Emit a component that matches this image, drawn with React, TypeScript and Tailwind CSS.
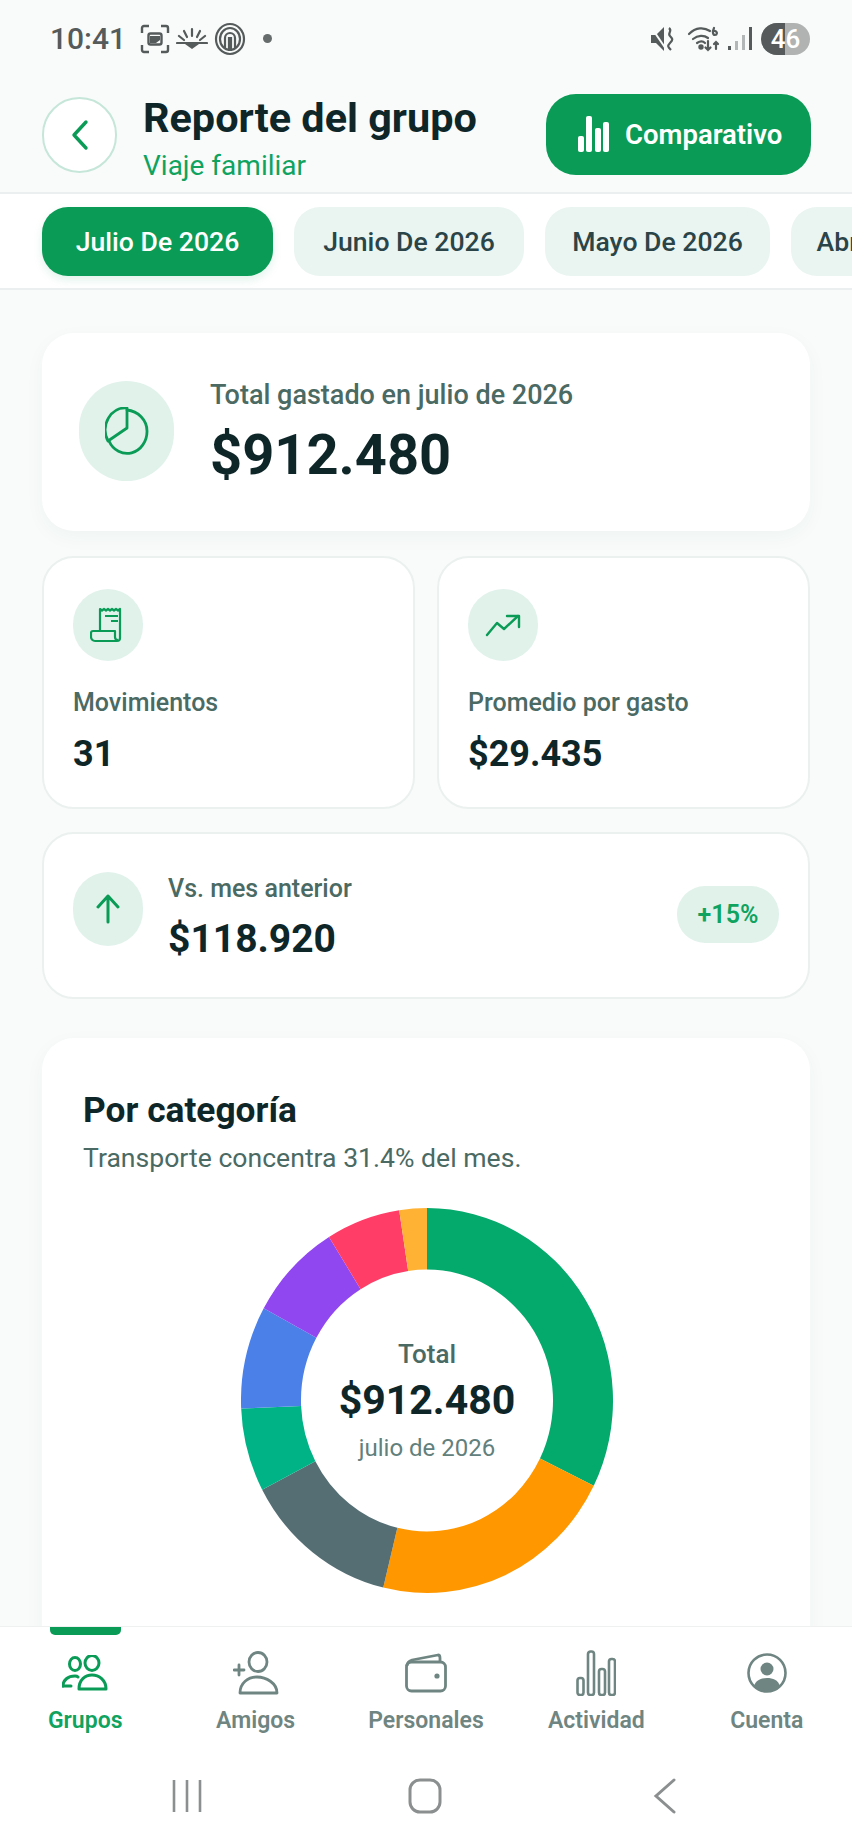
import type { ReactNode } from "react";

const GREEN = "#0A9C57";

const months = [
  { label: "Julio De 2026", width: "w-[231px]" },
  { label: "Junio De 2026", width: "w-[230px]" },
  { label: "Mayo De 2026", width: "w-[225px]" },
  { label: "Abril De 2026", width: "w-[212px]" },
];

// sweep ends in degrees, clockwise from 12 o'clock
const slices = [
  { end: 116.3, color: "#04A96C" },
  { end: 193.6, color: "#FF9800" },
  { end: 242.4, color: "#546E74" },
  { end: 267.6, color: "#00B386" },
  { end: 298.6, color: "#4A80E8" },
  { end: 328.2, color: "#9147F0" },
  { end: 351.4, color: "#FF3D67" },
  { end: 360, color: "#FFB234" },
];

function slicePath(from: number, to: number) {
  const cx = 186;
  const cy = 192.5;
  const pt = (deg: number, rx: number, ry: number) => {
    const a = (deg * Math.PI) / 180;
    return `${(cx + rx * Math.sin(a)).toFixed(2)} ${(cy - ry * Math.cos(a)).toFixed(2)}`;
  };
  const large = to - from > 180 ? 1 : 0;
  return `M${pt(from, 186, 192.5)} A186 192.5 0 ${large} 1 ${pt(to, 186, 192.5)} L${pt(to, 126, 131)} A126 131 0 ${large} 0 ${pt(from, 126, 131)} Z`;
}

function Donut() {
  let start = 0;
  return (
    <svg width="372" height="385" viewBox="0 0 372 385">
      {slices.map((s) => {
        const d = slicePath(start, s.end);
        start = s.end;
        return <path key={s.color} d={d} fill={s.color} />;
      })}
    </svg>
  );
}

function StatusBar() {
  return (
    <div className="flex h-[76px] shrink-0 items-center justify-between pl-[50px] pr-[42px] pt-[1px] text-[#555a5a]">
      <div className="flex items-center">
        <span className="text-[30px] font-medium leading-none">10:41</span>
        <svg className="ml-[14px]" width="30" height="30" viewBox="0 0 30 30" fill="none" stroke="currentColor" strokeWidth="2.4">
          <path d="M2 9V4a2 2 0 0 1 2-2h5M21 2h5a2 2 0 0 1 2 2v5M28 21v5a2 2 0 0 1-2 2h-5M9 28H4a2 2 0 0 1-2-2v-5" />
          <rect x="8.5" y="9.5" width="13" height="11" rx="2" />
          <path d="M10 12h10v4l-4 3h-6z" fill="currentColor" stroke="none" />
        </svg>
        <svg className="ml-[6px]" width="32" height="24" viewBox="0 0 32 24" fill="none" stroke="currentColor" strokeWidth="2.2" strokeLinecap="round">
          <path d="M16 2v7M8 4l3 6M24 4l-3 6M3 9l5 4M29 9l-5 4M1 16h30" />
          <path d="M9 17h14l-7 5z" fill="currentColor" stroke="none" />
        </svg>
        <svg className="ml-[6px]" width="32" height="34" viewBox="0 0 32 34" fill="none" stroke="currentColor" strokeWidth="2.2">
          <ellipse cx="16" cy="17" rx="14" ry="15" />
          <ellipse cx="16" cy="17" rx="10" ry="11" />
          <path d="M11 26v-10a5 5 0 0 1 10 0v10" />
          <path d="M15 29v-13h2v13" />
        </svg>
        <span className="ml-[17px] h-[9px] w-[9px] rounded-full bg-[#666b6b]" />
      </div>
      <div className="flex items-center">
        <svg width="26" height="28" viewBox="0 0 26 28" fill="currentColor">
          <path d="M1 10h5l8-8v24l-8-8H1z" />
          <path d="M1 2l15 22" stroke="#f8fbfa" strokeWidth="2" />
          <path d="M19 3c4 3-2 5 1 8s3 4 0 7-2 4 1 7" fill="none" stroke="currentColor" strokeWidth="2.2" />
        </svg>
        <svg className="ml-[11px]" width="33" height="26" viewBox="0 0 33 26" fill="none" stroke="currentColor" strokeWidth="2.2" strokeLinecap="round">
          <path d="M2 8c7-7 15-7 21-3M6 13c5-4 11-4 15-1M10 17c3-2 6-2 8 0" />
          <circle cx="14" cy="21" r="1.6" fill="currentColor" />
          <path d="M21 15v9m-2.500-2.500 2.500 2.500 2.500-2.500M29 23v-7m-2 2 2-2 2 2M27 2c-2 4-1 7 1 7s3-3 0-4" />
        </svg>
        <svg className="ml-[8px]" width="24" height="26" viewBox="0 0 24 26">
          <rect x="0" y="20" width="3" height="4" fill="#555a5a" />
          <rect x="7" y="15" width="3" height="9" fill="#b4b7b7" />
          <rect x="14" y="9" width="3" height="15" fill="#b4b7b7" />
          <rect x="21" y="1" width="3" height="23" fill="#555a5a" />
        </svg>
        <span className="relative ml-[9px] flex h-[32px] w-[49px] items-center justify-center overflow-hidden rounded-full bg-[#b1b3b3] text-[26px] font-medium leading-none text-white">
          <span className="absolute inset-y-0 left-0 w-[24px] bg-[#565a5a]" />
          <span className="relative">46</span>
        </span>
      </div>
    </div>
  );
}

function Header() {
  return (
    <header className="flex h-[116px] shrink-0 items-center justify-between pl-[42px] pr-[41px] pt-[2px]">
      <div className="flex items-center">
        <div className="flex h-[76px] w-[75px] items-center justify-center rounded-full border-2 border-[#c5e6d9] bg-white">
          <svg width="20" height="32" viewBox="0 0 20 32" fill="none" stroke={GREEN} strokeWidth="3.4" strokeLinecap="round" strokeLinejoin="round">
            <path d="M16 3 4 16l12 13" />
          </svg>
        </div>
        <div className="ml-[26px] mt-[7px] flex flex-col">
          <span className="text-[41.4px] font-bold leading-[46px] text-[#0f2629]">Reporte del grupo</span>
          <span className="mt-[8px] text-[28px] leading-[34px] text-[#0FA35F]">Viaje familiar</span>
        </div>
      </div>
      <button className="mb-[2px] flex h-[81px] w-[265px] items-center rounded-[30px] bg-[#0A9C57] pl-[32px] text-white">
        <svg width="31" height="36" viewBox="0 0 31 36" fill="white">
          <rect x="0" y="20" width="6" height="16" rx="2" />
          <rect x="8" y="0" width="6" height="36" rx="2" />
          <rect x="17" y="12" width="6" height="24" rx="2" />
          <rect x="25" y="6" width="6" height="30" rx="2" />
        </svg>
        <span className="ml-[16px] pt-[2px] text-[27.5px] font-semibold">Comparativo</span>
      </button>
    </header>
  );
}

function MonthTabs() {
  return (
    <div className="flex h-[98px] shrink-0 items-center gap-[21px] overflow-hidden border-y-2 border-[#eceff0] bg-white pl-[42px]">
      {months.map((m, i) => (
        <span
          key={m.label}
          className={
            i === 0
              ? `flex h-[69px] shrink-0 items-center justify-center rounded-[26px] bg-[#0A9C57] pt-[2px] text-[26.6px] font-medium text-white shadow-[0_4px_10px_rgba(10,156,87,0.12)] ${m.width}`
              : `flex h-[69px] shrink-0 items-center justify-center rounded-[26px] bg-[#EAF5F1] pt-[2px] text-[26.6px] font-medium text-[#2a4447] ${m.width}`
          }
        >
          {m.label}
        </span>
      ))}
    </div>
  );
}

function IconCircle({ size, children }: { size: string; children: ReactNode }) {
  return <div className={`flex shrink-0 items-center justify-center rounded-full bg-[#E1F2EB] ${size}`}>{children}</div>;
}

function Summary() {
  return (
    <section className="flex h-[198px] items-center rounded-[32px] bg-white pb-[3px] pl-[37px] shadow-[0_6px_20px_rgba(30,70,60,0.04)]">
      <IconCircle size="h-[100px] w-[95px]">
        <svg width="44" height="48" viewBox="0 0 44 48" fill="none" stroke={GREEN} strokeWidth="2.8" strokeLinejoin="round" strokeLinecap="round">
          <path d="M22 3c11 1 20 10 20 21a20 22 0 0 1-38 10" />
          <path d="M22 1a20 22 0 0 0-19 33l19-13z" />
        </svg>
      </IconCircle>
      <div className="ml-[36px] flex flex-col pt-[5px]">
        <span className="text-[27px] font-medium leading-[34px] text-[#4a6a63]">Total gastado en julio de 2026</span>
        <span className="mt-[10px] text-[56px] font-bold leading-[66px] text-[#0f2629]">$912.480</span>
      </div>
    </section>
  );
}

function StatCard({ icon, label, value }: { icon: ReactNode; label: string; value: string }) {
  return (
    <div className="h-[253px] rounded-[32px] border-2 border-[#ebf1ef] bg-white pl-[29px] pt-[31px]">
      <IconCircle size="h-[72px] w-[70px]">{icon}</IconCircle>
      <div className="mt-[26px] text-[25px] font-medium leading-[32px] text-[#4a6a63]">{label}</div>
      <div className="mt-[13px] text-[36px] font-bold leading-[44px] text-[#0f2629]">{value}</div>
    </div>
  );
}

function Stats() {
  return (
    <div className="mt-[25px] grid grid-cols-2 gap-[22px]">
      <StatCard
        label="Movimientos"
        value="31"
        icon={
          <svg width="36" height="36" viewBox="0 0 36 36" fill="none" stroke={GREEN} strokeWidth="2.2" strokeLinejoin="round">
            <path d="M10 24V2l2 1.500 2-1.500 2 1.500 2-1.500 2 1.500 2-1.500 2 1.500 2-1.500 2 1.500 2-1.500v29a3 3 0 0 1-3 3H5a4 4 0 0 1-4-4v-4a2 2 0 0 1 2-2h22v6a3 3 0 0 0 3 3" />
            <path d="M15 9h13M21 14h7" />
          </svg>
        }
      />
      <StatCard
        label="Promedio por gasto"
        value="$29.435"
        icon={
          <svg width="36" height="24" viewBox="0 0 36 24" fill="none" stroke={GREEN} strokeWidth="2.4" strokeLinejoin="round" strokeLinecap="round">
            <path d="M2 22 12 10l7 6L33 3" />
            <path d="M22 3h12v11" />
          </svg>
        }
      />
    </div>
  );
}

function VersusCard() {
  return (
    <div className="mt-[23px] flex h-[167px] items-center rounded-[32px] border-2 border-[#ebf1ef] bg-white pl-[29px] pr-[29px]">
      <IconCircle size="mb-[14px] h-[74px] w-[70px]">
        <svg width="26" height="30" viewBox="0 0 26 30" fill="none" stroke={GREEN} strokeWidth="3" strokeLinecap="round" strokeLinejoin="round">
          <path d="M13 28V2M3 13 13 2l10 11" />
        </svg>
      </IconCircle>
      <div className="ml-[25px] flex flex-col pt-[4px]">
        <span className="text-[25px] font-medium leading-[32px] text-[#4a6a63]">Vs. mes anterior</span>
        <span className="mt-[11px] text-[39px] font-bold leading-[46px] text-[#0f2629]">$118.920</span>
      </div>
      <span className="ml-auto mt-[-2px] flex h-[57px] w-[102px] items-center justify-center rounded-[28px] bg-[#E1F2EB] text-[25px] font-semibold text-[#0FA35F]">
        +15%
      </span>
    </div>
  );
}

function CategoryCard() {
  return (
    <section className="mt-[39px] rounded-[32px] bg-white pb-[120px] pl-[41px] pt-[50px] shadow-[0_6px_20px_rgba(30,70,60,0.04)]">
      <h2 className="text-[35.3px] font-bold leading-[44px] text-[#0f2629]">Por categoría</h2>
      <p className="mt-[9px] text-[26.6px] leading-[34px] text-[#4a6a63]">Transporte concentra 31.4% del mes.</p>
      <div className="relative ml-[158px] mt-[33px] h-[385px] w-[372px]">
        <Donut />
        <div className="absolute inset-0 flex flex-col items-center justify-center">
          <span className="text-[26px] font-medium leading-[34px] text-[#4a6a63]">Total</span>
          <span className="mt-[3px] text-[41px] font-bold leading-[52px] text-[#0f2629]">$912.480</span>
          <span className="mt-[6px] text-[24px] leading-[32px] text-[#62807c]">julio de 2026</span>
        </div>
      </div>
    </section>
  );
}

const navItems: { label: string; active?: boolean; icon: ReactNode }[] = [
  {
    label: "Grupos",
    active: true,
    icon: (
      <svg width="46" height="36" viewBox="0 0 46 36" fill="none" stroke={GREEN} strokeWidth="3" strokeLinejoin="round">
        <ellipse cx="13" cy="9" rx="5.500" ry="6.500" />
        <ellipse cx="30" cy="8" rx="7" ry="7.500" />
        <path d="M1 31c0-6 5-10 12-10 1 0 2 0 3 1" strokeLinecap="round" />
        <path d="M1 31h8" strokeLinecap="round" />
        <path d="M17 34c0-9 6-14 13-14s14 5 14 14z" />
      </svg>
    ),
  },
  {
    label: "Amigos",
    icon: (
      <svg width="46" height="44" viewBox="0 0 46 44" fill="none" stroke="#6F8581" strokeWidth="2.8" strokeLinejoin="round" strokeLinecap="round">
        <ellipse cx="25" cy="11" rx="9" ry="9.500" />
        <path d="M1 19h10M6 14v10" />
        <path d="M7 42c0-10 8-16 17-16s20 6 20 16z" />
      </svg>
    ),
  },
  {
    label: "Personales",
    icon: (
      <svg width="42" height="40" viewBox="0 0 42 40" fill="none" stroke="#6F8581" strokeWidth="2.8" strokeLinejoin="round">
        <rect x="1.500" y="9" width="39" height="29" rx="5" />
        <path d="M2 13c0-3 2-5 5-6l26-5c1 0 2 1 2 3v4" />
        <circle cx="32" cy="23" r="2.600" fill="#6F8581" stroke="none" />
      </svg>
    ),
  },
  {
    label: "Actividad",
    icon: (
      <svg width="40" height="46" viewBox="0 0 40 46" fill="none" stroke="#6F8581" strokeWidth="2.6">
        <rect x="1.500" y="28" width="6" height="17" rx="2.500" />
        <rect x="12" y="1.500" width="6" height="43.500" rx="2.500" />
        <rect x="23" y="19" width="6" height="26" rx="2.500" />
        <rect x="33" y="9" width="6" height="36" rx="2.500" />
      </svg>
    ),
  },
  {
    label: "Cuenta",
    icon: (
      <svg width="40" height="40" viewBox="0 0 40 40" fill="none" stroke="#6F8581" strokeWidth="2.6">
        <circle cx="20" cy="20" r="18.500" />
        <ellipse cx="20" cy="16" rx="6.500" ry="6.500" fill="#6F8581" stroke="none" />
        <path d="M7 33c2-6 7-8 13-8s11 2 13 8c-3 3-8 5-13 5s-10-2-13-5z" fill="#6F8581" stroke="none" />
      </svg>
    ),
  },
];

function BottomNav() {
  return (
    <nav className="relative grid h-[120px] shrink-0 grid-cols-5 border-t border-[#eef1f0] bg-white">
      {navItems.map((item) => (
        <div key={item.label} className="relative flex flex-col items-center">
          {item.active && <span className="absolute left-[50px] top-0 h-[8px] w-[71px] rounded-b-[5px] bg-[#0A9C57]" />}
          <div className="flex h-[80px] items-center justify-center pt-[11px]">{item.icon}</div>
          <span className={item.active ? "text-[23px] font-semibold leading-[28px] text-[#0FA35F]" : "text-[23px] font-semibold leading-[28px] text-[#6F8581]"}>
            {item.label}
          </span>
        </div>
      ))}
    </nav>
  );
}

function SystemNav() {
  return (
    <div className="flex h-[100px] shrink-0 items-center justify-center bg-white pb-[1px] pr-[5px]">
      <svg width="32" height="32" viewBox="0 0 32 32" fill="none" stroke="#8b8f8f" strokeWidth="2.6">
        <path d="M3 0v32M16 0v32M29 0v32" />
      </svg>
      <svg className="ml-[205px]" width="34" height="36" viewBox="0 0 34 36" fill="none" stroke="#8b8f8f" strokeWidth="3">
        <rect x="2" y="2" width="30" height="32" rx="10" />
      </svg>
      <svg className="ml-[211px]" width="24" height="36" viewBox="0 0 24 36" fill="none" stroke="#8b8f8f" strokeWidth="3" strokeLinecap="round">
        <path d="M21 2 3 18l18 16" />
      </svg>
    </div>
  );
}

export default function App() {
  return (
    <div className="flex h-[1846px] w-[852px] flex-col overflow-hidden bg-[#F8FBFA] font-['Roboto',sans-serif]">
      <StatusBar />
      <Header />
      <MonthTabs />
      <main className="min-h-0 flex-1 overflow-hidden px-[42px] pt-[43px]">
        <Summary />
        <Stats />
        <VersusCard />
        <CategoryCard />
      </main>
      <BottomNav />
      <SystemNav />
    </div>
  );
}
